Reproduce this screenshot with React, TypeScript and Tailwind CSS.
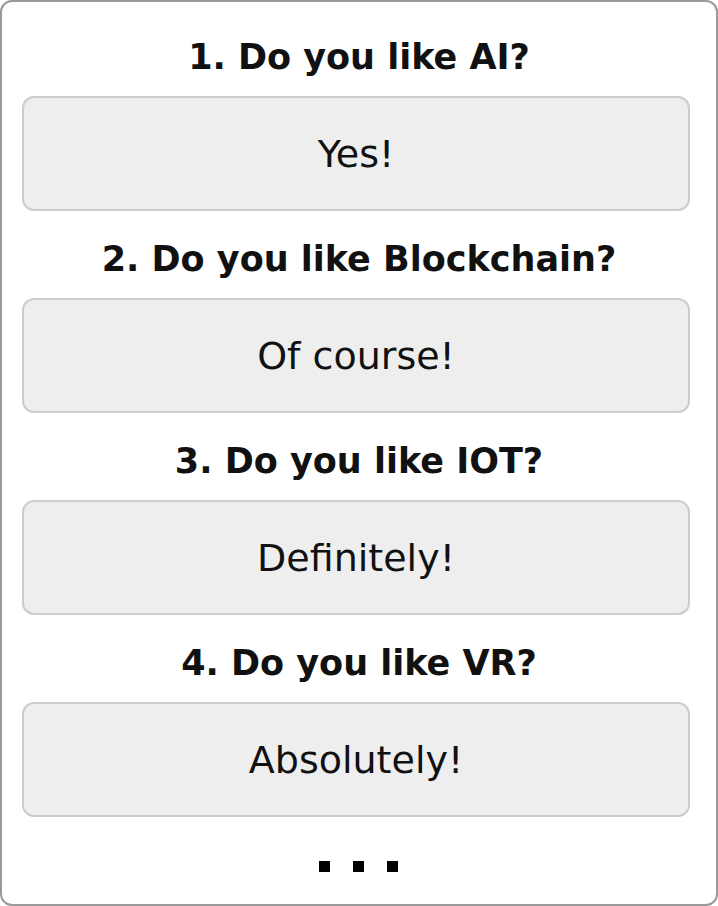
import React from 'react';

const questions = [
  { q: '1. Do you like AI?', a: 'Yes!' },
  { q: '2. Do you like Blockchain?', a: 'Of course!' },
  { q: '3. Do you like IOT?', a: 'Definitely!' },
  { q: '4. Do you like VR?', a: 'Absolutely!' },
];

const App: React.FC = () => {
  return (
    <div className="w-[718px] h-[906px] bg-white">
      <div
        className="h-full border-2 border-[#999] rounded-[12px] pt-[7px] pl-[20px] pr-[26px] text-[#111]"
        style={{ fontFamily: '"DejaVu Sans", "Liberation Sans", sans-serif' }}
      >
        {questions.map((item) => (
          <div key={item.q}>
            <div className="h-[87px] flex items-center justify-center pt-[8px] pl-[6px]">
              <h2 className="text-[35px] leading-[44px] font-bold">{item.q}</h2>
            </div>
            <div className="h-[115px] rounded-[12px] border-2 border-[#ccc] bg-[#eee] flex items-center justify-center">
              <span className="text-[38px] leading-[44px]">{item.a}</span>
            </div>
          </div>
        ))}

        {/* more questions */}
        <div className="flex justify-center gap-[23px] mt-[44px] pl-[4px]">
          <div className="w-[11px] h-[11px] bg-black" />
          <div className="w-[11px] h-[11px] bg-black" />
          <div className="w-[11px] h-[11px] bg-black" />
        </div>
      </div>
    </div>
  );
};

export default App;
